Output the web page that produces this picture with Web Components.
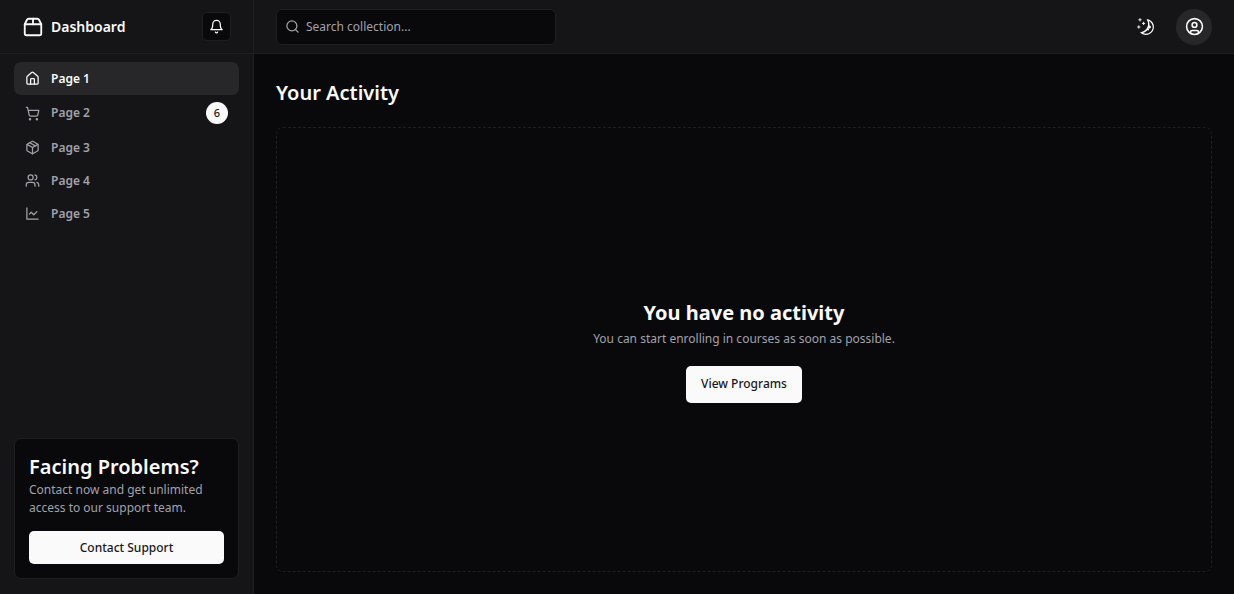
<!DOCTYPE html>
<html lang="en">
<head>
<meta charset="utf-8">
<meta name="viewport" content="width=device-width, initial-scale=1">
<title>Dashboard</title>
<style>
:root {
  --bg: #09090b;
  --panel: #151517;
  --line: #1f1f22;
  --active: #27272a;
  --fg: #fafafa;
  --muted: #a1a1aa;
  --ink: #18181b;
}
body {
  margin: 0;
  background: var(--bg);
  color: var(--fg);
  font: 12px/18px "Segoe UI", "Noto Sans", "Open Sans", sans-serif;
}
</style>
</head>
<body>
<app-shell>
  <app-sidebar slot="sidebar">
    <nav-item icon="home" href="#page-1" current>Page 1</nav-item>
    <nav-item icon="cart" href="#page-2" badge="6">Page 2</nav-item>
    <nav-item icon="package" href="#page-3">Page 3</nav-item>
    <nav-item icon="users" href="#page-4">Page 4</nav-item>
    <nav-item icon="chart" href="#page-5">Page 5</nav-item>
    <support-card slot="footer"></support-card>
  </app-sidebar>
  <app-topbar slot="topbar"></app-topbar>
  <activity-view></activity-view>
</app-shell>

<script>
const line = (body, width = 2) =>
  `<svg viewBox="0 0 24 24" fill="none" stroke="currentColor" stroke-width="${width}" stroke-linecap="round" stroke-linejoin="round" aria-hidden="true">${body}</svg>`;

const ICONS = {
  box: line('<path d="M3 9h18v10a2 2 0 0 1-2 2H5a2 2 0 0 1-2-2V9Z"/><path d="m3 9 2.45-4.9A2 2 0 0 1 7.24 3h9.52a2 2 0 0 1 1.8 1.1L21 9"/><path d="M12 3v6"/>'),
  bell: line('<path d="M6 8a6 6 0 0 1 12 0c0 7 3 9 3 9H3s3-2 3-9"/><path d="M10.3 21a1.94 1.94 0 0 0 3.4 0"/>'),
  home: line('<path d="M15 21v-8a1 1 0 0 0-1-1h-4a1 1 0 0 0-1 1v8"/><path d="M3 10a2 2 0 0 1 .709-1.528l7-5.999a2 2 0 0 1 2.582 0l7 5.999A2 2 0 0 1 21 10v9a2 2 0 0 1-2 2H5a2 2 0 0 1-2-2z"/>'),
  cart: line('<circle cx="8" cy="21" r="1"/><circle cx="19" cy="21" r="1"/><path d="M2.05 2.05h2l2.66 12.42a2 2 0 0 0 2 1.58h9.78a2 2 0 0 0 1.95-1.57l1.65-7.43H5.12"/>'),
  package: line('<path d="m7.5 4.27 9 5.15"/><path d="M21 8a2 2 0 0 0-1-1.73l-7-4a2 2 0 0 0-2 0l-7 4A2 2 0 0 0 3 8v8a2 2 0 0 0 1 1.73l7 4a2 2 0 0 0 2 0l7-4A2 2 0 0 0 21 16Z"/><path d="m3.3 7 8.7 5 8.7-5"/><path d="M12 22V12"/>'),
  users: line('<path d="M16 21v-2a4 4 0 0 0-4-4H6a4 4 0 0 0-4 4v2"/><circle cx="9" cy="7" r="4"/><path d="M22 21v-2a4 4 0 0 0-3-3.87"/><path d="M16 3.13a4 4 0 0 1 0 7.75"/>'),
  chart: line('<path d="M3 3v18h18"/><path d="m19 9-5 5-4-4-3 3"/>'),
  search: line('<circle cx="11" cy="11" r="8"/><path d="m21 21-4.3-4.3"/>'),
  user: line('<circle cx="12" cy="12" r="10"/><circle cx="12" cy="10" r="3"/><path d="M7 20.662V19a2 2 0 0 1 2-2h6a2 2 0 0 1 2 2v1.662"/>'),
  moon: `<svg viewBox="0 0 15 15" fill="currentColor" aria-hidden="true"><g fill="none" stroke="currentColor" stroke-width=".8" stroke-linecap="round"><path d="M2.5.5v2M1.5 1.5h2M5.5 3.5v2M4.5 4.5h2M1.5 6.5v2M.5 7.5h2"/></g><path fill-rule="evenodd" d="M8.54406 0.98184L8.24618 0.941586C8.03275 0.917676 7.90692 1.1655 8.02936 1.34194C8.17013 1.54479 8.29981 1.75592 8.41754 1.97445C8.91878 2.90485 9.20322 3.96932 9.20322 5.10022C9.20322 8.37201 6.82247 11.0878 3.69887 11.6097C3.45736 11.65 3.20988 11.6772 2.96008 11.6906C2.74563 11.702 2.62729 11.9535 2.77721 12.1072C2.84551 12.1773 2.91535 12.2458 2.98667 12.3128L3.05883 12.3795L3.31883 12.6045L3.50684 12.7532L3.62796 12.8433L3.81491 12.9742L3.99079 13.089C4.11175 13.1651 4.23536 13.2375 4.36157 13.3059L4.62496 13.4412L4.88553 13.5607L5.18837 13.6828L5.43169 13.7686C5.56564 13.8128 5.70149 13.8529 5.83857 13.8885C5.94262 13.9155 6.04767 13.9401 6.15405 13.9622C6.27993 13.9883 6.40713 14.0109 6.53544 14.0298L6.85241 14.0685L7.11934 14.0892C7.24637 14.0965 7.37436 14.1002 7.50322 14.1002C11.1483 14.1002 14.1032 11.1453 14.1032 7.50023C14.1032 7.25044 14.0893 7.00389 14.0623 6.76131L14.0255 6.48407C13.991 6.26083 13.9453 6.04129 13.8891 5.82642C13.8213 5.56709 13.7382 5.31398 13.6409 5.06881L13.5279 4.80132L13.3766 4.48666C13.2178 4.17773 13.0353 3.88295 12.8312 3.60423L12.6782 3.40352L12.4793 3.16432L12.1961 2.85951L11.8134 2.50184L11.4925 2.24191L10.9562 1.87446L10.6346 1.68894L10.1938 1.47176L9.67791 1.2669L9.10075 1.09489L8.54406 0.98184ZM10.4032 5.30023C10.4032 4.27588 10.2002 3.29829 9.83244 2.40604C11.7623 3.28995 13.1032 5.23862 13.1032 7.50023C13.1032 10.593 10.596 13.1002 7.50322 13.1002C6.63646 13.1002 5.81597 12.9036 5.08355 12.5522C6.5419 12.0941 7.81081 11.2082 8.74322 10.0416C8.87963 10.2284 9.10028 10.3497 9.34928 10.3497C9.76349 10.3497 10.0993 10.0139 10.0993 9.59971C10.0993 9.24256 9.84965 8.94373 9.51535 8.86816C9.57741 8.75165 9.63653 8.63334 9.6926 8.51332C9.88358 8.63163 10.1088 8.69993 10.35 8.69993C11.0403 8.69993 11.6 8.14028 11.6 7.44993C11.6 6.75976 11.0406 6.20024 10.3505 6.19993C10.3853 5.90487 10.4032 5.60464 10.4032 5.30023Z"/></svg>`
};

const define = (name, render) =>
  customElements.define(name, class extends HTMLElement {
    connectedCallback() {
      if (this.shadowRoot) return;
      const template = document.createElement('template');
      template.innerHTML = render(this);
      this.attachShadow({ mode: 'open' }).append(template.content.cloneNode(true));
    }
  });

define('ui-icon', el => `
<style>
  :host { display: block; flex: none; width: var(--size, 15px); height: var(--size, 15px); }
  svg { display: block; width: 100%; height: 100%; }
</style>${ICONS[el.getAttribute('name')]}`);

define('ui-button', () => `
<style>
  :host { display: block; }
  button {
    width: 100%; height: var(--height, 33px); padding: 0 var(--pad, 11px);
    border: 0; border-radius: 5px; background: var(--fg); color: var(--ink);
    font: inherit; font-weight: 500; cursor: pointer;
  }
</style>
<button type="button"><slot></slot></button>`);

define('app-shell', () => `
<style>
  :host { display: grid; grid-template-columns: 254px minmax(0, 1fr); min-height: 100vh; }
  .column { display: flex; flex-direction: column; }
  main { flex: 1; display: flex; flex-direction: column; }
</style>
<slot name="sidebar"></slot>
<div class="column">
  <slot name="topbar"></slot>
  <main><slot></slot></main>
</div>`);

define('app-sidebar', () => `
<style>
  :host { display: flex; flex-direction: column; background: var(--panel); border-right: 1px solid var(--line); }
  header {
    display: flex; align-items: center; justify-content: space-between;
    height: 54px; padding: 0 22px; box-sizing: border-box; border-bottom: 1px solid var(--line);
  }
  .brand {
    display: flex; align-items: center; gap: 7px;
    color: inherit; text-decoration: none; font-size: 14px; font-weight: 600;
  }
  .brand ui-icon { --size: 22px; }
  .bell {
    display: grid; place-items: center; width: 29px; height: 29px; padding: 0;
    border: 1px solid var(--line); border-radius: 5px; background: var(--bg); color: inherit;
  }
  nav { flex: 1; padding: 8px 14px; }
  footer { padding: 15px 14px; }
</style>
<header>
  <a class="brand" href="#"><ui-icon name="box"></ui-icon>Dashboard</a>
  <button class="bell" type="button" aria-label="Toggle notifications"><ui-icon name="bell"></ui-icon></button>
</header>
<nav><slot></slot></nav>
<footer><slot name="footer"></slot></footer>`);

define('nav-item', el => `
<style>
  :host { display: block; }
  a {
    display: flex; align-items: center; gap: 11px; min-height: 19px; padding: 7px 11px;
    border-radius: 7px; color: var(--muted); text-decoration: none; font-weight: 600;
  }
  a[aria-current] { background: var(--active); color: var(--fg); }
  .badge {
    display: grid; place-items: center; width: 22px; height: 22px; margin-left: auto;
    border-radius: 50%; background: var(--fg); color: var(--ink); font-size: 11px; font-weight: 500;
  }
</style>
<a href="${el.getAttribute('href')}" ${el.hasAttribute('current') ? 'aria-current="page"' : ''}>
  <ui-icon name="${el.getAttribute('icon')}"></ui-icon><slot></slot>
  ${el.hasAttribute('badge') ? `<span class="badge">${el.getAttribute('badge')}</span>` : ''}
</a>`);

define('support-card', () => `
<style>
  :host { display: block; padding: 14px; border: 1px solid var(--line); border-radius: 7px; background: var(--bg); }
  h2 { margin: 0; font-size: 20px; line-height: 28px; font-weight: 600; }
  p { margin: 0 0 14px; color: var(--muted); line-height: 18px; }
</style>
<h2>Facing Problems?</h2>
<p>Contact now and get unlimited access to our support team.</p>
<ui-button>Contact Support</ui-button>`);

define('app-topbar', () => `
<style>
  :host {
    display: flex; align-items: center; gap: 12px; height: 54px; padding: 0 22px;
    box-sizing: border-box; background: var(--panel); border-bottom: 1px solid var(--line);
  }
  form { flex: 1; }
  label {
    display: flex; align-items: center; gap: 6px; width: calc(100% / 3); min-width: 180px; height: 36px; padding: 0 8px;
    box-sizing: border-box; border: 1px solid var(--line); border-radius: 6px; background: var(--bg);
    color: var(--muted);
  }
  input { flex: 1; min-width: 0; padding: 0; border: 0; outline: 0; background: none; color: var(--fg); font: inherit; }
  input::placeholder { color: var(--muted); opacity: 1; }
  button { display: grid; place-items: center; width: 36px; height: 36px; padding: 0; border: 0; border-radius: 6px; background: none; color: inherit; }
  .theme ui-icon { --size: 18px; }
  .account { border-radius: 50%; background: var(--active); }
  .account ui-icon { --size: 19px; }
</style>
<form role="search">
  <label><ui-icon name="search"></ui-icon><input type="search" placeholder="Search collection..." aria-label="Search collection"></label>
</form>
<button class="theme" type="button" aria-label="Toggle theme"><ui-icon name="moon"></ui-icon></button>
<button class="account" type="button" aria-label="Account menu"><ui-icon name="user"></ui-icon></button>`);

define('activity-view', () => `
<style>
  :host { flex: 1; display: flex; flex-direction: column; gap: 18px; padding: 22px; }
  h1 { margin: 0; font-size: 20px; line-height: 33px; font-weight: 600; }
  section {
    flex: 1; display: flex; flex-direction: column; align-items: center; justify-content: center;
    border: 1px dashed var(--line); border-radius: 7px; text-align: center;
  }
  h2 { margin: 0; font-size: 20px; line-height: 32px; font-weight: 700; }
  p { margin: 0 0 17px; color: var(--muted); line-height: 20px; }
  ui-button { --height: 37px; --pad: 15px; }
</style>
<h1>Your Activity</h1>
<section>
  <h2>You have no activity</h2>
  <p>You can start enrolling in courses as soon as possible.</p>
  <ui-button>View Programs</ui-button>
</section>`);
</script>
</body>
</html>
